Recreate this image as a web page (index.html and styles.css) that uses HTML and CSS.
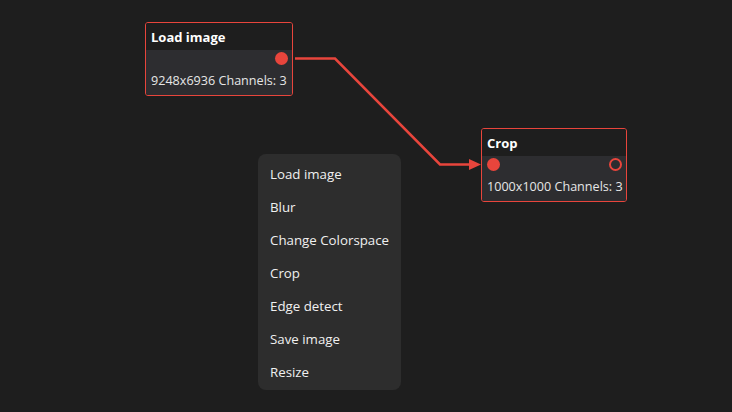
FILE: index.html
```html
<!DOCTYPE html>
<html>
<head>
<meta charset="utf-8">
<link rel="stylesheet" href="styles.css">
</head>
<body>
<div class="canvas">
  <svg class="wires" width="732" height="412" viewBox="0 0 732 412">
    <polyline points="295,58.5 335,58.5 440,164.5 472,164.5" fill="none" stroke="#e8453c" stroke-width="2.5"/>
    <polygon points="469,159 481,164.5 469,170" fill="#e8453c"/>
  </svg>

  <div class="node node-load">
    <div class="node-head">Load image</div>
    <div class="node-body">
      <div class="ports">
        <span class="port"></span>
        <span class="port filled"></span>
      </div>
      <div class="info">9248x6936 Channels: 3</div>
    </div>
  </div>

  <div class="node node-crop">
    <div class="node-head">Crop</div>
    <div class="node-body">
      <div class="ports">
        <span class="port filled"></span>
        <span class="port hollow"></span>
      </div>
      <div class="info">1000x1000 Channels: 3</div>
    </div>
  </div>

  <ul class="menu">
    <li>Load image</li>
    <li>Blur</li>
    <li>Change Colorspace</li>
    <li>Crop</li>
    <li>Edge detect</li>
    <li>Save image</li>
    <li>Resize</li>
  </ul>
</div>
</body>
</html>
```

FILE: styles.css
```css
html, body {
  margin: 0;
  padding: 0;
  background: #1e1e1e;
}
body {
  font-family: "Open Sans", "Noto Sans", sans-serif;
  color: #f2f2f2;
}
.canvas {
  position: relative;
  width: 732px;
  height: 412px;
  overflow: hidden;
  background: #1e1e1e;
}
.wires {
  position: absolute;
  left: 0;
  top: 0;
}
.node {
  position: absolute;
  box-sizing: border-box;
  height: 74px;
  border: 1px solid #e8453c;
  border-radius: 3px;
  overflow: hidden;
  display: flex;
  flex-direction: column;
}
.node-load { left: 145px; top: 22px; width: 148px; }
.node-crop { left: 481px; top: 128px; width: 146px; }
.node-head {
  height: 27px;
  box-sizing: border-box;
  padding: 6px 0 0 5px;
  background: #1e1e1e;
  font-weight: 700;
  font-size: 13px;
  line-height: 17px;
  color: #ffffff;
}
.node-body {
  flex: 1;
  background: #2d2d30;
  display: flex;
  flex-direction: column;
}
.ports {
  height: 17px;
  display: flex;
  justify-content: space-between;
  align-items: center;
  padding: 0 4px 0 5px;
}
.port {
  width: 13px;
  height: 13px;
  box-sizing: border-box;
  border-radius: 50%;
}
.port.filled { background: #e8453c; }
.port.hollow { border: 2px solid #e8453c; }
.info {
  padding: 6px 0 0 5px;
  font-size: 12.6px;
  line-height: 16px;
  color: #e6e6e6;
  white-space: nowrap;
}
.menu {
  position: absolute;
  left: 258px;
  top: 154px;
  width: 143px;
  height: 236px;
  box-sizing: border-box;
  margin: 0;
  padding: 4px 0 0 0;
  list-style: none;
  background: #2d2d2d;
  border-radius: 8px;
}
.menu li {
  height: 33px;
  line-height: 33px;
  padding-left: 12px;
  font-size: 13.3px;
  color: #f0f0f0;
}
```
